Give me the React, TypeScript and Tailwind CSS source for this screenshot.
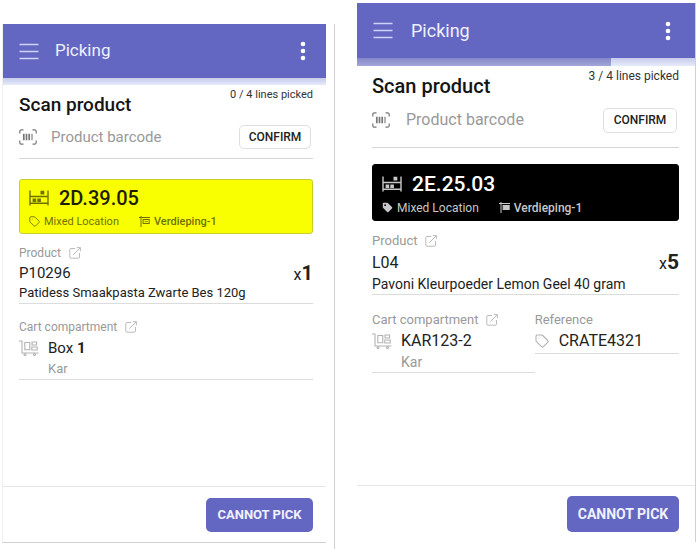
import clsx from "clsx"
import type { ReactNode } from "react"

type IconProps = { className?: string }

function MenuIcon({ className }: IconProps) {
  return (
    <svg viewBox="0 0 20 17" fill="none" stroke="currentColor" strokeWidth="1.5" className={className}>
      <path d="M0.5 1.5h19M0.5 8.5h19M0.5 15.5h19" />
    </svg>
  )
}

function MoreIcon({ className }: IconProps) {
  return (
    <svg viewBox="0 0 6 20" fill="currentColor" className={className}>
      <circle cx="3" cy="3" r="2.3" />
      <circle cx="3" cy="10" r="2.3" />
      <circle cx="3" cy="17" r="2.3" />
    </svg>
  )
}

function BarcodeIcon({ className }: IconProps) {
  return (
    <svg viewBox="0 0 18 16" fill="none" stroke="currentColor" className={className}>
      <path strokeWidth="1.2" d="M4.5 0.8H2.6Q0.8 0.8 0.8 2.6V4.5M13.5 0.8h1.9q1.8 0 1.8 1.8V4.5M4.5 15.2H2.6Q0.8 15.2 0.8 13.4V11.5M13.5 15.2h1.9q1.8 0 1.8-1.8V11.5" />
      <path strokeWidth="1.7" d="M4.8 4.7v6.6M7.5 4.7v6.6M10.2 4.7v6.6" />
      <path strokeWidth="1.1" d="M13 4.7v6.6" />
    </svg>
  )
}

function RackIcon({ className }: IconProps) {
  return (
    <svg viewBox="0 0 20 16" fill="none" stroke="currentColor" className={className}>
      <path strokeWidth="1.4" d="M1 0.5v15M19 0.5v15M1 6.5h18M1 13.2h18" />
      <path fill="currentColor" stroke="none" d="M11.5 0.8h3.8v3.8h-3.8zM3.6 8.5h3.6v3.6H3.6zM8.3 8.5h3.6v3.6H8.3z" />
    </svg>
  )
}

function TagIcon({ className, solid }: IconProps & { solid?: boolean }) {
  return (
    <svg viewBox="0 0 14 14" fill="none" stroke="currentColor" strokeWidth="1.1" strokeLinejoin="round" className={className}>
      {solid ? (
        <path
          fill="currentColor"
          stroke="none"
          fillRule="evenodd"
          d="M1 2.2Q1 1 2.2 1h4.3q.7 0 1.2.5l5 5q.9.9 0 1.8l-4.4 4.4q-.9.9-1.8 0l-5-5Q1 7.2 1 6.5zM4 2.8a1.2 1.2 0 1 0 0 2.4a1.2 1.2 0 1 0 0-2.4"
        />
      ) : (
        <>
          <path d="M1 2.2Q1 1 2.2 1h4.3q.7 0 1.2.5l5 5q.9.9 0 1.8l-4.4 4.4q-.9.9-1.8 0l-5-5Q1 7.2 1 6.5z" />
          <circle cx="4" cy="4" r="0.6" fill="currentColor" stroke="none" />
        </>
      )}
    </svg>
  )
}

function SignIcon({ className, solid }: IconProps & { solid?: boolean }) {
  return (
    <svg viewBox="0 0 12 12" fill="none" stroke="currentColor" strokeWidth="1.1" className={className}>
      <path d="M2.2 0v12M0 1.7h12" />
      <path fill={solid ? "currentColor" : "none"} d="M4.5 3.9h6.6v4.4H4.5z" />
      <path strokeWidth="0.8" d="M6 6.1h3.6" />
    </svg>
  )
}

function OpenIcon({ className }: IconProps) {
  return (
    <svg viewBox="0 0 12 12" fill="none" stroke="currentColor" strokeWidth="1" className={className}>
      <path d="M6.2 1.5H2Q0.8 1.5 0.8 2.7V10q0 1.2 1.2 1.2h7.3q1.2 0 1.2-1.2V6" />
      <path d="M4.3 7.7 11.2 0.8M7.8 0.6h3.6v3.6" />
    </svg>
  )
}

function CartIcon({ className }: IconProps) {
  return (
    <svg viewBox="0 0 20 16" fill="none" stroke="currentColor" strokeWidth="1.1" className={className}>
      <path d="M0 1h3v12h16.5" />
      <path d="M5.8 2.5h5v7.3h-5zM13 2h4.6v3H13zM12.8 7h5.4v3h-5.4z" />
      <circle cx="6" cy="14.5" r="1" />
      <circle cx="15.5" cy="14.5" r="1" />
    </svg>
  )
}

const compact = {
  header: "h-[54px] pl-4 pr-5 gap-4",
  title: "text-[17px]",
  progress: "h-[7px]",
  body: "pl-4 pr-[13px]",
  counter: "text-[11px] leading-5",
  heading: "text-[19px] leading-7",
  scan: "h-10 pb-[3px] gap-[14px]",
  input: "text-[15px]",
  confirm: "h-6 w-[72px] text-xs",
  location: "mt-5 h-[55px]",
  code: "text-[20px] leading-6",
  meta: "text-[11px] leading-5",
  label: "text-xs leading-5",
  product: "pt-[9px]",
  row: "h-5",
  number: "text-[15px] leading-[22px]",
  name: "text-[13px] leading-5",
  quantity: "text-xl",
  compartments: "pt-[13px]",
  kind: "text-[13px] leading-5",
  footer: "h-[56px] pr-[13px]",
  button: "h-[34px] w-[107px] text-[13px]",
}

const roomy: typeof compact = {
  header: "h-[55px] pl-4 pr-6 gap-[18px]",
  title: "text-[18px]",
  progress: "h-2",
  body: "pl-[15px] pr-4",
  counter: "text-xs leading-5",
  heading: "text-[20px] leading-7",
  scan: "h-12 pb-[7px] gap-4",
  input: "text-base",
  confirm: "h-[25px] w-[74px] text-xs",
  location: "mt-4 h-[57px]",
  code: "text-[21px] leading-6",
  meta: "text-xs leading-5",
  label: "text-[13px] leading-5",
  product: "pt-[10px]",
  row: "h-[23px]",
  number: "text-base leading-[22px]",
  name: "text-sm leading-5",
  quantity: "text-[21px]",
  compartments: "pt-[15px]",
  kind: "text-sm leading-5",
  footer: "h-[57px] pr-4",
  button: "h-9 w-[112px] text-sm",
}

type Styles = typeof compact

interface Pick {
  id: string
  picked: number
  total: number
  location: string
  dark?: boolean
  sku: string
  name: string
  quantity: number
  box: ReactNode
  reference?: string
}

function PickingScreen({ pick, s }: { pick: Pick; s: Styles }) {
  return (
    <div className="flex flex-1 flex-col bg-white">
      <header className={clsx("flex items-center bg-[#6467c1] text-[#eef0ff]", s.header)}>
        <button type="button" aria-label="Menu">
          <MenuIcon className="h-[17px] w-5 text-[#cfd2fa]" />
        </button>
        <h1 className={s.title}>Picking</h1>
        <button type="button" aria-label="More" className="ml-auto">
          <MoreIcon className="h-5 w-[6px] text-white" />
        </button>
      </header>
      <div className={clsx("bg-gradient-to-b from-[#c6cbeb] to-[#e6ebfb]", s.progress)}>
        <div
          className="h-full bg-gradient-to-b from-[#8487c9] to-[#a4a7d9]"
          style={{ width: `${(pick.picked / pick.total) * 100}%` }}
        />
      </div>

      <main className={clsx("flex-1", s.body)}>
        <div className="flex items-start justify-between">
          <h2 className={clsx("pt-[6px] font-medium text-[#151515]", s.heading)}>Scan product</h2>
          <p className={clsx("text-[#333]", s.counter)}>
            {pick.picked} / {pick.total} lines picked
          </p>
        </div>
        <form className={clsx("flex items-center border-b border-[#d5d5d5]", s.scan)}>
          <label htmlFor={pick.id} className="shrink-0" aria-label="Product barcode">
            <BarcodeIcon className="h-4 w-[18px] text-[#777]" />
          </label>
          <input
            id={pick.id}
            placeholder="Product barcode"
            className={clsx("w-0 min-w-0 flex-1 bg-transparent outline-none placeholder:text-[#999]", s.input)}
          />
          <button
            type="button"
            className={clsx("mr-[2px] rounded-[5px] border border-[#dedede] font-medium text-[#222]", s.confirm)}
          >
            CONFIRM
          </button>
        </form>

        <section
          className={clsx(
            "flex flex-col justify-center gap-[2px] rounded-[3px] border pt-1 pl-[9px]",
            s.location,
            pick.dark ? "border-black bg-black text-[#c8c8c8]" : "border-[#c9ce2c] bg-[#faff00] text-[#6f7200]",
          )}
        >
          <div className="flex items-center gap-[10px]">
            <RackIcon className="h-4 w-5" />
            <span className={clsx("font-medium", s.code, pick.dark ? "text-white" : "text-[#1d1e00]")}>
              {pick.location}
            </span>
          </div>
          <div className={clsx("flex items-center", s.meta)}>
            <TagIcon solid={pick.dark} className="mr-1 h-[11px] w-[11px]" />
            <span>Mixed Location</span>
            <SignIcon solid={pick.dark} className="mr-1 ml-5 h-[11px] w-[11px]" />
            <span className="font-medium">Verdieping-1</span>
          </div>
        </section>

        <section className={clsx("border-b border-[#dcdcdc]", s.product)}>
          <a href="#product" className={clsx("flex items-center gap-2 text-[#999]", s.label)}>
            Product <OpenIcon className="h-3 w-3 text-[#bbb]" />
          </a>
          <div className={clsx("flex items-center justify-between text-[#222]", s.row)}>
            <span className={s.number}>{pick.sku}</span>
            <span className="text-base leading-5">
              x<b className={clsx("font-bold", s.quantity)}>{pick.quantity}</b>
            </span>
          </div>
          <p className={clsx("text-[#222]", s.name)}>{pick.name}</p>
        </section>

        <div className={clsx("flex items-start", s.compartments)}>
          <section className={clsx("border-b border-[#dcdcdc]", pick.reference ? "w-[53%]" : "w-full")}>
            <a href="#cart" className={clsx("flex items-center gap-2 text-[#999]", s.label)}>
              Cart compartment <OpenIcon className="h-3 w-3 text-[#bbb]" />
            </a>
            <div className="flex items-center gap-[9px]">
              <CartIcon className="h-4 w-5 text-[#b3b3b3]" />
              <span className={clsx("text-[#222]", s.number)}>{pick.box}</span>
            </div>
            <p className={clsx("pl-[29px] text-[#999]", s.kind)}>Kar</p>
          </section>
          {pick.reference && (
            <section className="flex-1 border-b border-[#dcdcdc] pb-px">
              <p className={clsx("text-[#999]", s.label)}>Reference</p>
              <div className="flex items-center gap-[10px]">
                <TagIcon className="h-[14px] w-[14px] text-[#b3b3b3]" />
                <span className={clsx("text-[#222]", s.number)}>{pick.reference}</span>
              </div>
            </section>
          )}
        </div>
      </main>

      <footer className={clsx("flex items-center justify-end border-t border-[#e4e6ea]", s.footer)}>
        <button type="button" className={clsx("rounded-[5px] bg-[#6467c1] font-bold text-[#f0f1ff]", s.button)}>
          CANNOT PICK
        </button>
      </footer>
    </div>
  )
}

const firstPick: Pick = {
  id: "barcode-1",
  picked: 0,
  total: 4,
  location: "2D.39.05",
  sku: "P10296",
  name: "Patidess Smaakpasta Zwarte Bes 120g",
  quantity: 1,
  box: (
    <>
      Box <b className="font-bold">1</b>
    </>
  ),
}

const lastPick: Pick = {
  id: "barcode-2",
  picked: 3,
  total: 4,
  location: "2E.25.03",
  dark: true,
  sku: "L04",
  name: "Pavoni Kleurpoeder Lemon Geel 40 gram",
  quantity: 5,
  box: "KAR123-2",
  reference: "CRATE4321",
}

export default function App() {
  return (
    <div className="grid min-h-screen grid-cols-[335fr_365fr] bg-white font-['Roboto',sans-serif]">
      <div className="flex flex-col pt-6">
        <div className="flex flex-1 border-r border-[#d0d0d0] pr-2 pb-[6px] pl-[2px]">
          <div className="flex flex-1 border-b border-l border-b-[#d0d0d0] border-l-[#f0f0f0]">
            <PickingScreen pick={firstPick} s={compact} />
          </div>
        </div>
      </div>
      <div className="flex pt-[3px] pr-1 pb-[7px] pl-[22px]">
        <div className="flex flex-1 border-r border-[#d0d0d0]">
          <PickingScreen pick={lastPick} s={roomy} />
        </div>
      </div>
    </div>
  )
}
